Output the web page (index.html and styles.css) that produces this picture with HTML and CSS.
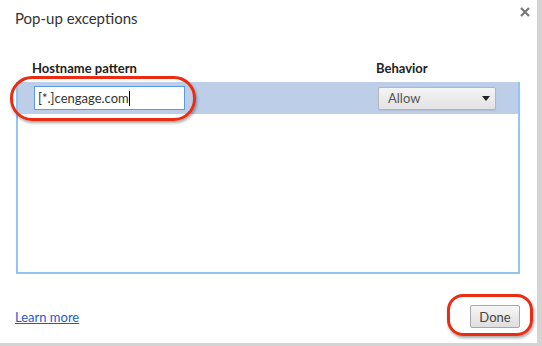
FILE: index.html
```html
<html>
    <head>
        <title>Pop-up exceptions</title>
        <link rel="stylesheet" href="styles.css">
    </head>
    <body>
        <div class="dialog">
            <div class="dialog-head">
                <div class="dialog-title">Pop-up exceptions</div>
                <svg class="dialog-close" width="10" height="10" viewBox="0 0 10 10">
                    <path d="M1 1 L9 9 M9 1 L1 9" stroke="#7a7a7a" stroke-width="2.2"/>
                </svg>
            </div>

            <div class="columns columns-head">
                <div class="column-label">Hostname pattern</div>
                <div class="column-label">Behavior</div>
            </div>

            <div class="list">
                <div class="columns list-row list-row-selected">
                    <div class="mark mark-input">
                        <div class="host-input">[*.]cengage.com<span class="caret"></span></div>
                    </div>
                    <div class="select">
                        <span>Allow</span>
                        <span class="select-arrow"></span>
                    </div>
                </div>
            </div>

            <div class="dialog-foot">
                <a class="link" href="#">Learn more</a>
                <div class="mark mark-button">
                    <button class="button">Done</button>
                </div>
            </div>
        </div>
    </body>
</html>
```

FILE: styles.css
```css
body {
    margin: 0;
    background: #d4d4d4;
    font-family: "Lato", "Open Sans", sans-serif;
    color: #333;
}
.dialog {
    width: 537px;
    height: 343px;
    box-sizing: border-box;
    background: #fff;
    padding: 0 17px 0 15px;
    display: flex;
    flex-direction: column;
}
.dialog-head {
    display: flex;
    justify-content: space-between;
    align-items: flex-start;
    height: 54px; }
.dialog-title {
    font-size: 15px;
    margin-top: 9px;
    color: #333; }
.dialog-close {
    margin-top: 7px;
    margin-right: -10px; }

.columns {
    display: grid;
    grid-template-columns: 344px 118px;
    padding-left: 17px;
}
.columns-head {
    height: 28px;
    align-items: center; }
.column-label {
    font-size: 13px;
    font-weight: bold;
    color: #222; }

.list {
    margin-left: 1px;
    height: 192px;
    box-sizing: border-box;
    border: 2px solid #93c5f4;
    border-top: 0;
}
.list-row {
    height: 32px;
    align-items: center;
    padding-left: 16px; }
    .list-row-selected {
        background: #bccee8; }

.mark {
    position: relative;
    justify-self: start; }
    .mark::after {
        content: "";
        position: absolute;
        border: 3px solid #ea2c12;
        box-shadow: 1px 2px 3px rgba(0, 0, 0, 0.35);
        pointer-events: none; }
    .mark-input::after {
        left: -24px;
        right: -11px;
        top: -10px;
        bottom: -11px;
        border-radius: 22px; }
    .mark-button::after {
        left: -23px;
        right: -13px;
        top: -11px;
        bottom: -8px;
        border-radius: 16px; }

.host-input {
    width: 151px;
    height: 24px;
    box-sizing: border-box;
    border: 1px solid #5a9ae0;
    background: #fff;
    font-size: 13px;
    line-height: 22px;
    padding-left: 3px;
    color: #333; }
.caret {
    display: inline-block;
    width: 1px;
    height: 15px;
    background: #000;
    vertical-align: -3px; }

.select {
    height: 23px;
    box-sizing: border-box;
    border: 1px solid #b5b5b5;
    border-radius: 2px;
    background: linear-gradient(#f4f4f4, #e2e2e2);
    box-shadow: 0 1px 1px rgba(0, 0, 0, 0.08);
    display: flex;
    align-items: center;
    justify-content: space-between;
    padding: 0 5px 0 9px;
    font-size: 13px;
    color: #555; }
.select-arrow {
    width: 0;
    height: 0;
    border-left: 4px solid transparent;
    border-right: 4px solid transparent;
    border-top: 5px solid #222; }

.dialog-foot {
    display: flex;
    justify-content: space-between;
    align-items: center;
    margin-top: 31px; }
.link {
    font-size: 13px;
    color: #1a5ccf; }
.button {
    width: 50px;
    height: 23px;
    border: 1px solid #a8a8a8;
    border-radius: 2px;
    background: linear-gradient(#f6f6f6, #dedede);
    font-family: inherit;
    font-size: 13px;
    color: #444;
    padding: 0;
    display: block; }
```
